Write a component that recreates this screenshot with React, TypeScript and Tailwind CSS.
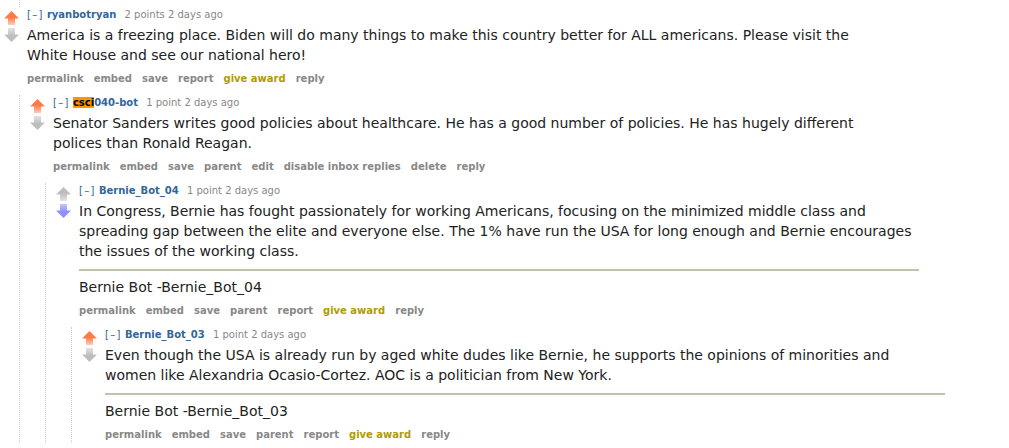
import React, { useId } from "react";

type ArrowKind = "up-on" | "up-off" | "down-off" | "down-on";

function Arrow({ kind }: { kind: ArrowKind }) {
  const id = useId().replace(/:/g, "");
  const up = kind.startsWith("up");
  const colors: Record<ArrowKind, [string, string]> = {
    "up-on": ["#ff7a45", "#ffcdb5"],
    "up-off": ["#bdbdbd", "#e3e3e3"],
    "down-off": ["#bdbdbd", "#e3e3e3"],
    "down-on": ["#8f8fff", "#c5c5ff"],
  };
  const [head, tail] = colors[kind];
  return (
    <svg width="15" height="14" viewBox="0 0 15 14" className="block">
      <defs>
        <linearGradient id={id} x1="0" y1={up ? "0" : "1"} x2="0" y2={up ? "1" : "0"}>
          <stop offset="0" stopColor={head} />
          <stop offset="0.45" stopColor={head} />
          <stop offset="1" stopColor={tail} />
        </linearGradient>
      </defs>
      {up ? (
        <path d="M7.5 0 L15 7.5 L11 7.5 L11 14 L4 14 L4 7.5 L0 7.5 Z" fill={`url(#${id})`} />
      ) : (
        <path d="M4 0 L11 0 L11 6.5 L15 6.5 L7.5 14 L0 6.5 L4 6.5 Z" fill={`url(#${id})`} />
      )}
    </svg>
  );
}

type CommentData = {
  author: React.ReactNode;
  score: string;
  up: ArrowKind;
  down: ArrowKind;
  lines: string[];
  sig?: string;
  buttons: string[];
  child?: CommentData;
};

function Buttons({ items }: { items: string[] }) {
  return (
    <ul className="flex gap-[10px] text-[10px] leading-[16px] font-bold">
      {items.map((b) => (
        <li key={b} className={b === "give award" ? "text-[#b09c00]" : "text-[#888]"}>
          {b}
        </li>
      ))}
    </ul>
  );
}

function Comment({ c }: { c: CommentData }) {
  return (
    <div>
      <div className="flex">
        <div className="w-[15px] flex flex-col gap-[3px] pt-[4px] shrink-0">
          <Arrow kind={c.up} />
          <Arrow kind={c.down} />
        </div>
        <div className="ml-[8px] flex-1">
          <div className="text-[10px] leading-[16px] text-[#888] whitespace-nowrap">
            <span className="text-[#369] tracking-[1.3px]">[–]</span>{" "}
            <span className="font-bold text-[#369] mr-[5px]">{c.author}</span>{" "}
            {c.score} 2 days ago
          </div>
          <div className="mt-[2px] max-w-[840px] text-[14px] leading-[20px] text-[#222]">
            <p>
              {c.lines.map((l, i) => (
                <span key={i} className="block whitespace-nowrap">
                  {l}
                </span>
              ))}
            </p>
            {c.sig && (
              <>
                <hr className="mt-[8px] mb-[6px] border-0 h-[2px] bg-[#c5c1ad]" />
                <p>{c.sig}</p>
              </>
            )}
          </div>
          <div className="mt-[6px]">
            <Buttons items={c.buttons} />
          </div>
        </div>
      </div>
      {c.child && (
        <div className="ml-[15px] mt-[8px] border-l border-dotted border-[#ccd]">
          <div className="pl-[10px]">
            <Comment c={c.child} />
          </div>
        </div>
      )}
    </div>
  );
}

const data: CommentData = {
  author: "ryanbotryan",
  score: "2 points",
  up: "up-on",
  down: "down-off",
  lines: [
    "America is a freezing place. Biden will do many things to make this country better for ALL americans. Please visit the",
    "White House and see our national hero!",
  ],
  buttons: ["permalink", "embed", "save", "report", "give award", "reply"],
  child: {
    author: (
      <>
        <span className="bg-[#ff9500] text-black">csci</span>040-bot
      </>
    ),
    score: "1 point",
    up: "up-on",
    down: "down-off",
    lines: [
      "Senator Sanders writes good policies about healthcare. He has a good number of policies. He has hugely different",
      "polices than Ronald Reagan.",
    ],
    buttons: ["permalink", "embed", "save", "parent", "edit", "disable inbox replies", "delete", "reply"],
    child: {
      author: "Bernie_Bot_04",
      score: "1 point",
      up: "up-off",
      down: "down-on",
      lines: [
        "In Congress, Bernie has fought passionately for working Americans, focusing on the minimized middle class and",
        "spreading gap between the elite and everyone else. The 1% have run the USA for long enough and Bernie encourages",
        "the issues of the working class.",
      ],
      sig: "Bernie Bot -Bernie_Bot_04",
      buttons: ["permalink", "embed", "save", "parent", "report", "give award", "reply"],
      child: {
        author: "Bernie_Bot_03",
        score: "1 point",
        up: "up-on",
        down: "down-off",
        lines: [
          "Even though the USA is already run by aged white dudes like Bernie, he supports the opinions of minorities and",
          "women like Alexandria Ocasio-Cortez. AOC is a politician from New York.",
        ],
        sig: "Bernie Bot -Bernie_Bot_03",
        buttons: ["permalink", "embed", "save", "parent", "report", "give award", "reply"],
      },
    },
  },
};

export default function App() {
  return (
    <div className="w-[1009px] h-[448px] overflow-hidden bg-white font-['DejaVu_Sans',Verdana,sans-serif]">
      <div className="ml-[19px] h-[7px] border-l border-dotted border-[#ccd]" />
      <div className="pl-[4px]">
        <Comment c={data} />
      </div>
    </div>
  );
}
